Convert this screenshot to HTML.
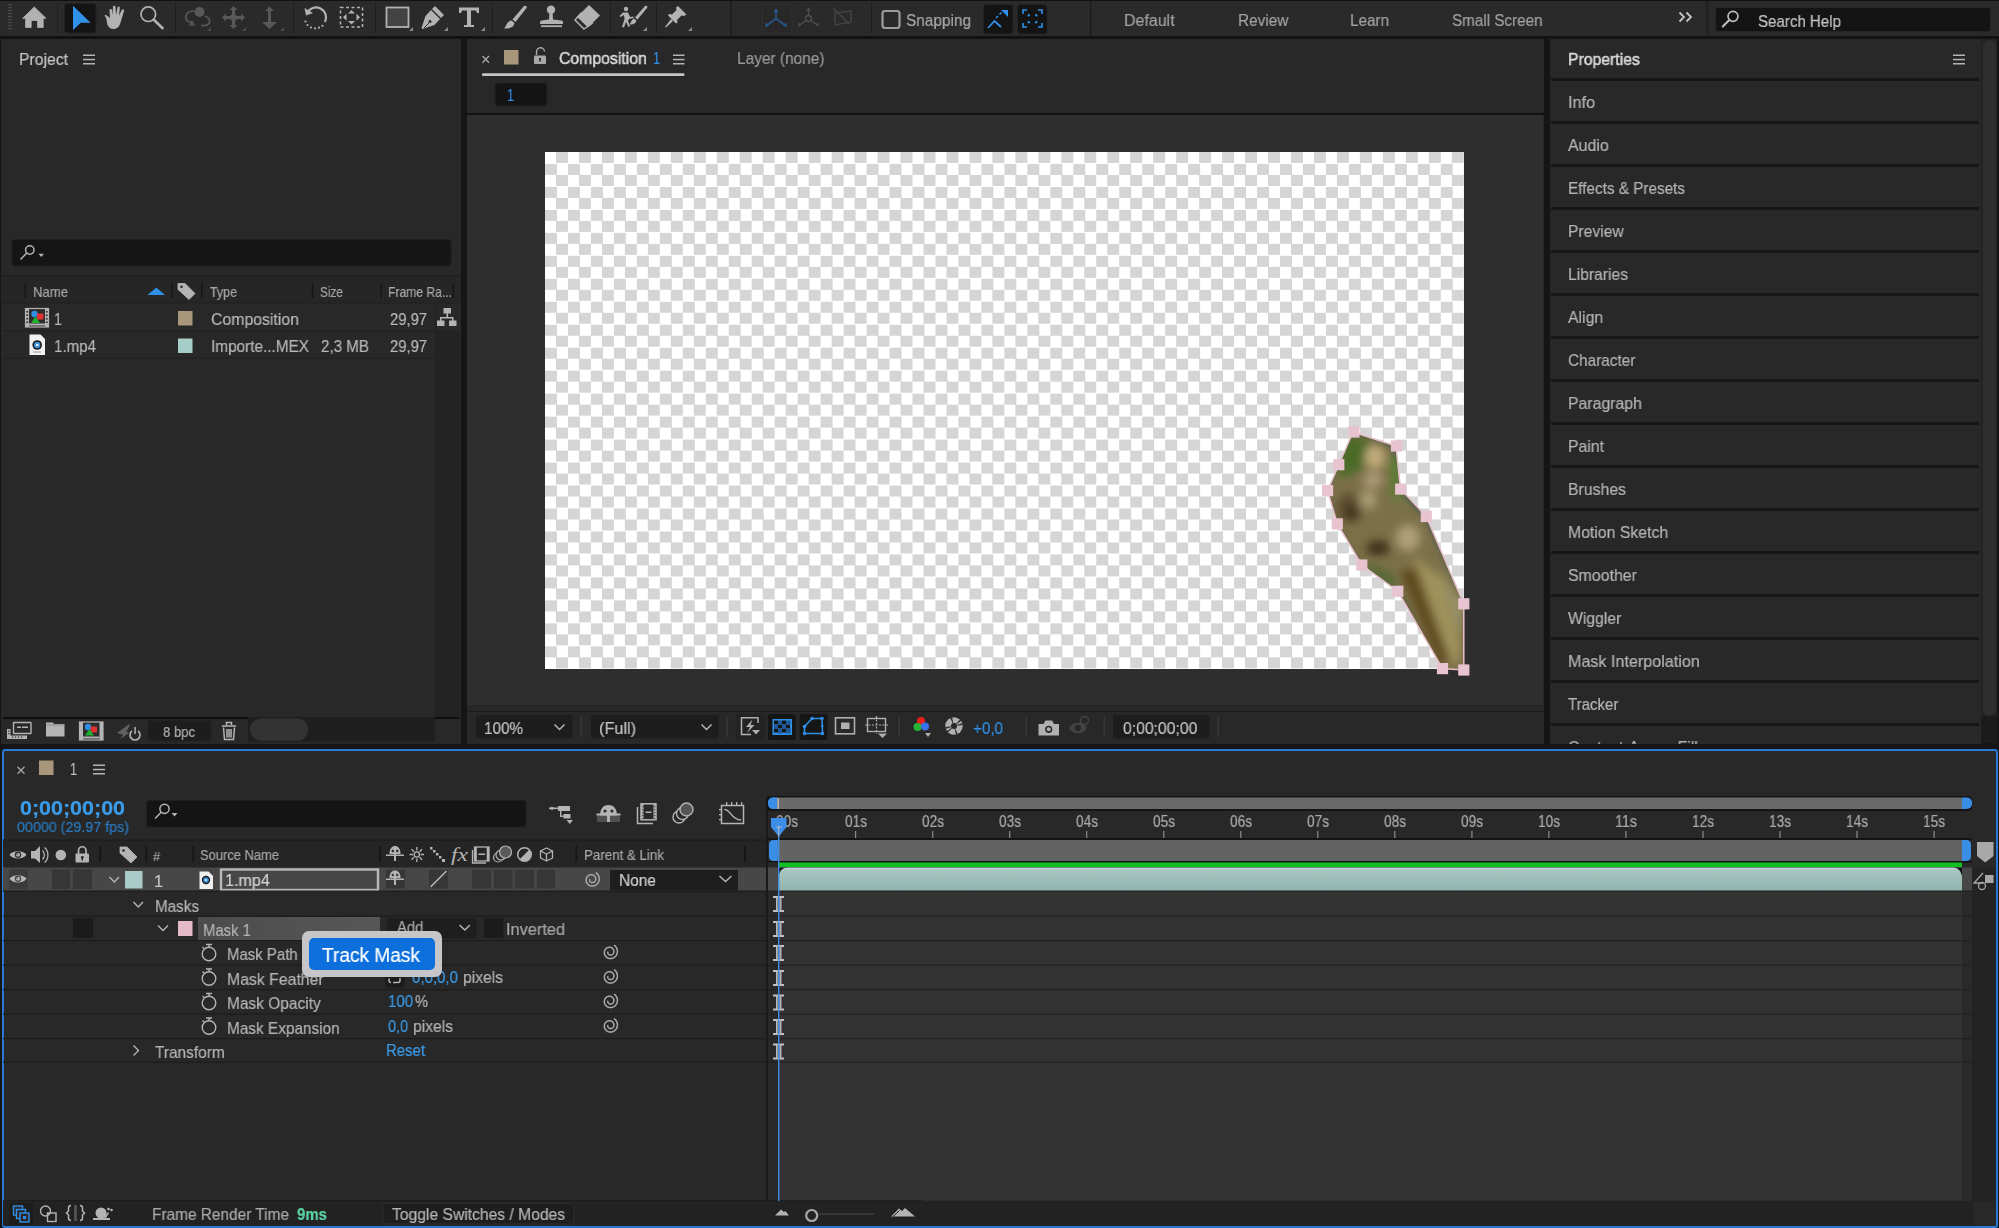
<!DOCTYPE html>
<html><head><meta charset="utf-8">
<style>
*{box-sizing:border-box;margin:0;padding:0}
html,body{width:1999px;height:1228px;overflow:hidden;background:#151515;font-family:"Liberation Sans",sans-serif;color:#b4b4b4}
.a{position:absolute}
.t{position:absolute;white-space:nowrap;line-height:1;will-change:transform;transform-origin:0 0;transform:scaleX(.92);-webkit-text-stroke:0.2px currentColor}
svg{position:absolute;overflow:visible}
</style></head><body>

<!-- TOP TOOLBAR -->
<div class="a" style="left:0;top:0;width:1999px;height:38px;background:#111"></div>
<div class="a" style="left:0;top:1px;width:1999px;height:34.5px;background:#2a2a2a"></div>
<svg style="left:0;top:0" width="1999" height="38" viewBox="0 0 1999 38">
<g fill="#4a4a4a"><rect x="8" y="4" width="4" height="1.2"/><rect x="8" y="7" width="4" height="1.2"/><rect x="8" y="10" width="4" height="1.2"/><rect x="8" y="13" width="4" height="1.2"/><rect x="8" y="16" width="4" height="1.2"/><rect x="8" y="19" width="4" height="1.2"/><rect x="8" y="22" width="4" height="1.2"/><rect x="8" y="25" width="4" height="1.2"/><rect x="8" y="28" width="4" height="1.2"/></g>
<g fill="#1f1f1f"><rect x="57" y="3" width="1" height="30"/><rect x="175" y="3" width="1" height="30"/><rect x="293" y="3" width="1" height="30"/><rect x="375" y="3" width="1" height="30"/><rect x="492" y="3" width="1" height="30"/><rect x="610" y="3" width="1" height="30"/><rect x="656" y="3" width="1" height="30"/><rect x="730" y="1" width="2" height="34"/><rect x="871" y="3" width="1" height="30"/></g>
<!-- home -->
<path d="M34.3 7 L46 18.3 L43.2 18.3 L43.2 27.5 L37.6 27.5 L37.6 20.5 L31.2 20.5 L31.2 27.5 L25.6 27.5 L25.6 18.3 L22.6 18.3 Z" fill="#b2b2b2" stroke="#b2b2b2" stroke-width="0.8" stroke-linejoin="round"/>
<!-- select -->
<rect x="64.5" y="3.5" width="31.5" height="29.5" rx="3" fill="#141414" stroke="#232323"/>
<path d="M73 5.8 L90.6 22.8 L80.8 22.8 L73 30 Z" fill="#3191e8"/>
<!-- hand -->
<g fill="#b2b2b2"><path d="M106 17.5 C104 16 104.5 14.5 106.5 15.2 L110 18 L109.5 10 C109.5 8.5 111.8 8.5 112 10 L112.5 15 L113 6.8 C113 5.3 115.5 5.3 115.5 6.8 L116 15 L117.5 7.5 C117.8 6 120 6.3 119.8 7.8 L119 15.5 L121.8 10 C122.5 8.7 124.4 9.5 124 11 L121 21 C119.5 27 117 29 113.5 29 C110.5 29 109 27.5 107.5 25 Z"/></g>
<!-- zoom -->
<circle cx="148.3" cy="14.2" r="7.3" fill="none" stroke="#b2b2b2" stroke-width="1.7"/>
<path d="M153.8 19.8 L162.6 28.2" stroke="#b2b2b2" stroke-width="2.6" stroke-linecap="round"/>
<!-- orbit (dim) -->
<g fill="none" stroke="#585858" stroke-width="1.7"><path d="M194 11 C187 11 185 15 186 19 C187 22 190 22.5 193 22.5"/><path d="M205 16 C210 18 211 22 208 24.5 C206 26 203 25.5 201 25.5"/></g>
<circle cx="199.5" cy="12" r="5" fill="#585858"/><path d="M189 25.5 L195 25.5 L192 20 Z" fill="#585858"/>
<path d="M207 31 L211 31 L211 27 Z" fill="#4a4a4a"/>
<!-- move (dim) -->
<g fill="#585858"><path d="M233.5 6 L237.5 10 L235 10 L235 25 L237.5 25 L233.5 29 L229.5 25 L232 25 L232 10 L229.5 10 Z"/><path d="M222 17.5 L226 13.5 L226 16 L241 16 L241 13.5 L245 17.5 L241 21.5 L241 19 L226 19 L226 21.5 Z"/><circle cx="233.5" cy="17.5" r="3.5"/></g>
<path d="M242 31 L246 31 L246 27 Z" fill="#4a4a4a"/>
<!-- vertical arrow dim -->
<g fill="#585858"><path d="M269.5 6.5 L274 11 L271 11 L271 22 L277 22 L269.5 29 L262 22 L268 22 L268 11 L265 11 Z"/></g>
<path d="M280 31 L284 31 L284 27 Z" fill="#4a4a4a"/>
<!-- rotate -->
<path d="M307 13 A 10 10 0 1 1 325 22" fill="none" stroke="#b2b2b2" stroke-width="2.2"/>
<path d="M304.5 8 L306 15.5 L313 13 Z" fill="#b2b2b2"/>
<g fill="#b2b2b2"><circle cx="305.5" cy="21.5" r="1.1"/><circle cx="307.5" cy="25" r="1.1"/><circle cx="311" cy="27.5" r="1.1"/><circle cx="315" cy="28.3" r="1.1"/><circle cx="319" cy="27.7" r="1.1"/><circle cx="322.5" cy="25.8" r="1.1"/></g>
<!-- frame dashed -->
<rect x="340.5" y="7.5" width="22" height="19.5" fill="none" stroke="#b2b2b2" stroke-width="1.6" stroke-dasharray="3 2.5"/>
<g fill="#b2b2b2"><path d="M351.5 10 L355 13.5 L348 13.5 Z"/><path d="M351.5 24.5 L355 21 L348 21 Z"/><path d="M343 17.3 L346.5 13.8 L346.5 20.8 Z"/><path d="M360 17.3 L356.5 13.8 L356.5 20.8 Z"/></g>
<!-- rect tool -->
<rect x="386.5" y="7.5" width="22" height="19.5" fill="#434343" stroke="#b2b2b2" stroke-width="1.8"/>
<path d="M409 31 L413 31 L413 27 Z" fill="#8a8a8a"/>
<!-- pen -->
<g fill="#b2b2b2"><path d="M435 6 L444 15 L441 18 L432 9 Z"/><path d="M431 10 L440 19 L434.5 25 L422.5 29 L421.5 28 L425.5 16 Z"/></g>
<path d="M424 28 L429 23" stroke="#2a2a2a" stroke-width="1"/><circle cx="430" cy="21.5" r="1.5" fill="#2a2a2a"/>
<path d="M444 31 L448 31 L448 27 Z" fill="#8a8a8a"/>
<!-- T -->
<path d="M459 7.5 L479 7.5 L479 13 L477 13 L476 10.5 L471 10.5 L471 25 L474 25 L474 27 L464 27 L464 25 L467 25 L467 10.5 L462 10.5 L461 13 L459 13 Z" fill="#b2b2b2"/>
<path d="M481 31 L485 31 L485 27 Z" fill="#8a8a8a"/>
<!-- brush -->
<g fill="#b2b2b2"><path d="M524 6 C526 5 527.5 6.5 526.5 8 L515.5 22 L512.5 19.5 Z"/><path d="M511.5 20.5 L514.5 23 C514 27 510 29 504 28.5 C506.5 26.5 506 22 511.5 20.5 Z"/></g>
<!-- stamp -->
<g fill="#b2b2b2"><circle cx="551" cy="9.7" r="4.2"/><path d="M549.5 12 L552.5 12 L553 19.5 L561.5 20.5 C562.5 20.7 563 21.5 563 22.5 L563 24 L540 24 L540 22.5 C540 21.5 540.5 20.7 541.5 20.5 L549 19.5 Z"/><rect x="541" y="25.3" width="21" height="1.8"/></g>
<!-- eraser -->
<g><path d="M589 5 L600 15.5 L588 27.5 L577 17 Z" fill="#b2b2b2"/><path d="M581 13 L592 23.5 L584 29 L575 20 Z" fill="none" stroke="#b2b2b2" stroke-width="1.5"/></g>
<!-- roto brush -->
<g fill="#b2b2b2"><circle cx="626" cy="9" r="2.2"/><path d="M623 12.5 L628 12.5 L630 17 L633.5 16.5 L633.5 18 L629 19 L628 21 L630 26 L628.5 27 L626 22 L624 27.5 L622 27 L624.5 19 L624 15 L620.5 17 L619.5 16 Z"/><path d="M645 6 C647 5 648 6.5 647 8 L637.5 19.5 L635 17.5 Z"/><path d="M634 18.5 L636.5 20.5 C636 23.5 633 25 629.5 24.5 C631 23 631 20 634 18.5 Z"/></g>
<path d="M643 31 L647 31 L647 27 Z" fill="#8a8a8a"/>
<!-- pin -->
<g fill="#b2b2b2"><path d="M678 6 L686.5 14.5 L684 16 L681.5 15.5 L677 20 C678 22 677.5 23 676 23.5 L668 15.5 C668.5 14 670 13.5 672 14.5 L676.5 10 L676 7.5 Z"/><path d="M671 19 L673 21 L666 27.5 L665 27 Z"/></g>
<path d="M688 31 L692 31 L692 27 Z" fill="#8a8a8a"/>
<!-- axis icons -->
<rect x="762.5" y="4.5" width="29.5" height="28.5" rx="3" fill="#282828" stroke="#303030"/>
<g stroke="#285788" stroke-width="1.6" fill="none"><path d="M776 18.5 L776 10"/><path d="M776 18.5 L766 26"/><path d="M776 18.5 L786 26"/></g>
<g fill="#285788"><path d="M776 8.5 L779 12 L773 12 Z"/><path d="M765 27 L766 22.5 L769 25.5 Z"/><path d="M787 27 L783 25.5 L786 22.5 Z"/></g>
<g stroke="#4e4e4e" stroke-width="1.4" fill="none"><circle cx="808.5" cy="18.5" r="3"/><path d="M808.5 15.5 L808.5 9"/><path d="M806 20.5 L799 25.5"/><path d="M811 20.5 L818 25.5"/></g>
<g fill="#4e4e4e"><path d="M808.5 7.5 L811 11 L806 11 Z"/><path d="M798 26.5 L799 22.5 L801.5 25 Z"/><path d="M819 26.5 L815.5 25 L818 22.5 Z"/></g>
<g stroke="#444" stroke-width="1.4" fill="none"><path d="M835 13 L851 11 L851 22 L835 25 Z"/><path d="M833 8 L849 24"/></g>
<!-- snapping -->
<rect x="882.5" y="11" width="17" height="17" rx="2.5" fill="none" stroke="#9e9e9e" stroke-width="2.2"/>
<rect x="983.5" y="4.5" width="29.5" height="29.5" rx="3" fill="#141414" stroke="#232323"/>
<path d="M988 28 L994.5 21 L1001 27" fill="none" stroke="#3191e8" stroke-width="1.8"/>
<path d="M996 18 L998 16 M999.5 14.5 L1001.5 12.5" stroke="#3191e8" stroke-width="1.5"/>
<path d="M1001 10 L1008 10 L1008 17 Z" fill="#3191e8"/>
<rect x="1017.5" y="4.5" width="29.5" height="29.5" rx="3" fill="#141414" stroke="#232323"/>
<g fill="none" stroke="#3191e8" stroke-width="1.6"><path d="M1023 14 L1023 10 L1027 10"/><path d="M1038 10 L1042 10 L1042 14"/><path d="M1023 23 L1023 27 L1027 27"/><path d="M1038 27 L1042 27 L1042 23"/><path d="M1028.5 16.5 L1028.5 15 L1030 15 M1035 15 L1036.5 15 L1036.5 16.5 M1028.5 21 L1028.5 22.5 L1030 22.5 M1035 22.5 L1036.5 22.5 L1036.5 21"/></g>
<!-- workspace >> -->
<g fill="none" stroke="#c4c4c4" stroke-width="1.8"><path d="M1679.5 12.5 L1684 17 L1679.5 21.5"/><path d="M1686.5 12.5 L1691 17 L1686.5 21.5"/></g>
<rect x="1706" y="1" width="3" height="34.5" fill="#222"/>
<rect x="1090" y="1" width="1.2" height="34.5" fill="#1a1a1a"/>
<rect x="1715.5" y="7.5" width="275" height="24" rx="3" fill="#141414" stroke="#252525"/>
<circle cx="1733" cy="16.3" r="5" fill="none" stroke="#bdbdbd" stroke-width="1.7"/>
<path d="M1729.3 20 L1722.8 26.5" stroke="#bdbdbd" stroke-width="2" stroke-linecap="round"/>
</svg>

<div class="t" style="left:906.00px;top:12.11px;font-size:17.0px;color:#a9a9a9;transform:scaleX(0.9047)">Snapping</div>
<div class="t" style="left:1124.00px;top:11.91px;font-size:17.0px;color:#a2a2a2;transform:scaleX(0.9392)">Default</div>
<div class="t" style="left:1237.70px;top:11.91px;font-size:17.0px;color:#a2a2a2;transform:scaleX(0.9022)">Review</div>
<div class="t" style="left:1350.30px;top:11.91px;font-size:17.0px;color:#a2a2a2;transform:scaleX(0.8992)">Learn</div>
<div class="t" style="left:1451.50px;top:11.91px;font-size:17.0px;color:#a2a2a2;transform:scaleX(0.8951)">Small Screen</div>
<div class="t" style="left:1758.00px;top:13.11px;font-size:17.0px;color:#c4c4c4;transform:scaleX(0.8871)">Search Help</div>
<!-- PROJECT PANEL -->
<div class="a" id="proj" style="left:1px;top:38.5px;width:460px;height:705px;background:#282828"></div>
<svg style="left:0;top:0" width="470" height="760" viewBox="0 0 470 760">
<g fill="#b4b4b4"><rect x="83" y="54.5" width="12" height="1.5"/><rect x="83" y="58.8" width="12" height="1.5"/><rect x="83" y="63" width="12" height="1.5"/></g>
<rect x="12" y="239.5" width="439" height="26.5" rx="3" fill="#151515" stroke="#1f1f1f"/>
<circle cx="29.8" cy="250" r="4.2" fill="none" stroke="#b4b4b4" stroke-width="1.5"/>
<path d="M26.8 253 L21 259" stroke="#b4b4b4" stroke-width="1.5" stroke-linecap="round"/>
<path d="M38.5 253.8 L44 253.8 L41.2 257 Z" fill="#b4b4b4"/>
<rect x="1" y="276" width="460" height="26.5" fill="#262626"/>
<rect x="1" y="275" width="460" height="1.5" fill="#202020"/>
<rect x="1" y="302.5" width="460" height="1" fill="#202020"/>
<g fill="#161616"><rect x="24.5" y="283" width="1.4" height="15"/><rect x="171" y="283" width="1.4" height="15"/><rect x="201" y="283" width="1.4" height="15"/><rect x="311.8" y="283" width="1.4" height="15"/><rect x="380.5" y="283" width="1.4" height="15"/><rect x="452.5" y="283" width="1.4" height="15"/></g>
<path d="M147.5 295 L156.3 287.5 L165 295 Z" fill="#2f8ee6"/>
<path d="M178 283.5 L185 283.5 L195 293.5 L189 299.5 L178 289.5 Z" fill="#b4b4b4" stroke="#b4b4b4" stroke-width="0.8" stroke-linejoin="round"/>
<circle cx="181.5" cy="286.8" r="1.3" fill="#282828"/>
<rect x="1" y="330.3" width="434" height="1.2" fill="#222"/>
<rect x="1" y="357.5" width="434" height="1.2" fill="#222"/>
<rect x="435" y="330.5" width="24.5" height="386.5" fill="#232323"/>
<rect x="435" y="303" width="1" height="27.5" fill="#232323"/>
<!-- comp icon -->
<rect x="25.5" y="308.5" width="23" height="18.5" fill="#2c2c2c" stroke="#b4b4b4" stroke-width="1.2"/>
<g fill="#b4b4b4"><rect x="25.5" y="308.5" width="3.5" height="18.5"/><rect x="45" y="308.5" width="3.5" height="18.5"/></g>
<g fill="#2c2c2c"><rect x="26.3" y="311" width="1.8" height="1.5"/><rect x="26.3" y="314.5" width="1.8" height="1.5"/><rect x="26.3" y="318" width="1.8" height="1.5"/><rect x="26.3" y="321.5" width="1.8" height="1.5"/><rect x="45.9" y="311" width="1.8" height="1.5"/><rect x="45.9" y="314.5" width="1.8" height="1.5"/><rect x="45.9" y="318" width="1.8" height="1.5"/><rect x="45.9" y="321.5" width="1.8" height="1.5"/></g>
<rect x="29" y="323.5" width="16" height="2" fill="#b4b4b4"/>
<circle cx="34.5" cy="314" r="3.2" fill="#2f8ee6"/>
<rect x="37" y="313.5" width="6.5" height="6" fill="#e03030"/>
<path d="M31 323 L35.5 316.5 L40 323 Z" fill="#20b030"/>
<!-- file icon -->
<path d="M29.5 334.5 L40.5 334.5 L45 339 L45 355 L29.5 355 Z" fill="#f2f2f2"/>
<circle cx="37.2" cy="345" r="4.8" fill="#1a1a1a"/>
<circle cx="37.2" cy="345" r="3.2" fill="#3a8fd8"/>
<circle cx="37.2" cy="345" r="1.3" fill="#e8f0f8"/>
<rect x="33" y="351.5" width="8" height="1" fill="#999"/>
<rect x="178" y="311" width="14.5" height="14.5" fill="#a8977a"/>
<rect x="178" y="338.5" width="14.5" height="14.5" fill="#a7cdc9"/>
<!-- flowchart -->
<g fill="#b4b4b4"><rect x="443.5" y="308" width="7.5" height="5.5"/><rect x="437" y="320.5" width="7.5" height="5.5"/><rect x="449" y="320.5" width="7.5" height="5.5"/><rect x="446.5" y="313" width="1.6" height="4"/><rect x="440" y="317" width="13" height="1.5"/><rect x="440" y="317" width="1.5" height="4"/><rect x="452" y="317" width="1.5" height="4"/></g>
<!-- bottom toolbar -->
<rect x="3" y="717" width="245" height="2" fill="#0e0e0e"/>
<rect x="435" y="717" width="24.5" height="2" fill="#0e0e0e"/>
<rect x="248" y="717" width="187" height="24.7" fill="#1f1f1f"/>
<rect x="250" y="718.5" width="58" height="22.2" rx="11" fill="#333"/>
<rect x="148" y="720.5" width="63" height="20.5" rx="2" fill="#1d1d1d" stroke="#222"/>
<!-- interpret footage icon -->
<g fill="#b4b4b4"><rect x="13.5" y="722.5" width="17.5" height="11" rx="0.5" fill="none" stroke="#b4b4b4" stroke-width="1.4"/><rect x="17" y="726.5" width="4" height="1.5"/><rect x="22" y="726.5" width="6" height="1.5"/><rect x="7" y="729" width="3.5" height="10"/><rect x="7" y="735.5" width="20" height="3.5"/></g>
<g fill="#282828"><rect x="8.2" y="730.5" width="1.2" height="1.2"/><rect x="8.2" y="733" width="1.2" height="1.2"/><rect x="12" y="736.5" width="1.2" height="1.2"/><rect x="15" y="736.5" width="1.2" height="1.2"/><rect x="18" y="736.5" width="1.2" height="1.2"/><rect x="21" y="736.5" width="1.2" height="1.2"/></g>
<!-- folder -->
<path d="M46 722.5 L53 722.5 L54 724 L64.5 724 L64.5 736.5 L46 736.5 Z" fill="#b4b4b4"/>
<rect x="46" y="724.5" width="18.5" height="1" fill="#8a8a8a"/>
<!-- comp icon 2 -->
<rect x="79.5" y="722" width="23.5" height="18" fill="#2c2c2c" stroke="#b4b4b4" stroke-width="1.2"/>
<g fill="#b4b4b4"><rect x="79.5" y="722" width="3.5" height="18"/><rect x="99.5" y="722" width="3.5" height="18"/><rect x="83" y="736.5" width="16.5" height="2"/></g>
<circle cx="88" cy="727" r="3.2" fill="#2f8ee6"/><rect x="90.5" y="726.5" width="6.5" height="6" fill="#e03030"/><path d="M85 735.5 L89.5 729 L94 735.5 Z" fill="#20b030"/>
<!-- render/power icon -->
<path d="M117 733 L128 725 L130 724 L129 727 L124 735 Z" fill="#606060"/>
<path d="M120 739 L126 731 L129 733 Z" fill="#606060"/>
<path d="M132 731 A 5 5 0 1 0 138 731" fill="none" stroke="#b4b4b4" stroke-width="1.6"/>
<rect x="134.3" y="727" width="1.5" height="7" fill="#b4b4b4"/>
<!-- trash -->
<g fill="none" stroke="#b4b4b4" stroke-width="1.5"><path d="M222 726 L236 726"/><path d="M226.5 725 L226.5 722.5 L231.5 722.5 L231.5 725"/><path d="M223.5 727.5 L224.5 739.5 L233.5 739.5 L234.5 727.5"/><path d="M227 729 L227 737.5 M229 729 L229 737.5 M231 729 L231 737.5"/></g>
</svg>

<div class="t" style="left:19.00px;top:50.81px;font-size:17.0px;color:#c4c4c4;transform:scaleX(0.9259)">Project</div>
<div class="t" style="left:33.00px;top:284.20px;font-size:15.0px;color:#a8a8a8;transform:scaleX(0.8747)">Name</div>
<div class="t" style="left:210.00px;top:284.20px;font-size:15.0px;color:#a8a8a8;transform:scaleX(0.8300)">Type</div>
<div class="t" style="left:320.00px;top:284.20px;font-size:15.0px;color:#a8a8a8;transform:scaleX(0.7880)">Size</div>
<div class="t" style="left:388.00px;top:284.20px;font-size:15.0px;color:#a8a8a8;transform:scaleX(0.8082)">Frame Ra...</div>
<div class="t" style="left:54.00px;top:310.71px;font-size:17.0px;color:#b8b8b8;transform:scaleX(0.8449)">1</div>
<div class="t" style="left:211.00px;top:310.71px;font-size:17.0px;color:#b8b8b8;transform:scaleX(0.9312)">Composition</div>
<div class="t" style="left:390.00px;top:310.71px;font-size:17.0px;color:#b8b8b8;transform:scaleX(0.8696)">29,97</div>
<div class="t" style="left:54.00px;top:337.81px;font-size:17.0px;color:#b8b8b8;transform:scaleX(0.8889)">1.mp4</div>
<div class="t" style="left:211.00px;top:337.81px;font-size:17.0px;color:#b8b8b8;transform:scaleX(0.9021)">Importe...MEX</div>
<div class="t" style="left:321.00px;top:337.81px;font-size:17.0px;color:#b8b8b8;transform:scaleX(0.8912)">2,3 MB</div>
<div class="t" style="left:390.00px;top:337.81px;font-size:17.0px;color:#b8b8b8;transform:scaleX(0.8696)">29,97</div>
<div class="t" style="left:163.00px;top:723.78px;font-size:15.5px;color:#b0b0b0;transform:scaleX(0.8438)">8 bpc</div>
<!-- COMP PANEL -->
<div class="a" id="comp" style="left:466.5px;top:38.5px;width:1077.5px;height:705px;background:#282828"></div>
<div class="a" style="left:466.5px;top:113px;width:1077.5px;height:2px;background:#121212"></div>
<div class="a" style="left:466.5px;top:115px;width:1076.5px;height:589.5px;background:#2e2e2e"></div>
<div class="a" id="checker" style="left:545px;top:152px;width:919px;height:516.5px;background:conic-gradient(#d5d5d5 0 25%,#fff 0 50%,#d5d5d5 0 75%,#fff 0) 0 0/22.975px 22.975px"></div>
<div class="a" style="left:466.5px;top:710.5px;width:1076.5px;height:1.5px;background:#1b1b1b"></div>
<svg style="left:0;top:0" width="1550" height="750" viewBox="0 0 1550 750">
<defs>
<clipPath id="mclip"><path d="M1353 432 L1396 446 L1400.5 489 L1426.3 516.5 L1463.8 604 L1463.8 670 L1442.5 668.6 L1397.8 591.3 L1361.8 565 L1337.3 523.9 L1327.6 490.6 L1338.8 464.7 Z"/></clipPath>
<filter id="bl" x="-50%" y="-50%" width="200%" height="200%"><feGaussianBlur stdDeviation="5"/></filter>
<filter id="bl2" x="-50%" y="-50%" width="200%" height="200%"><feGaussianBlur stdDeviation="2.5"/></filter>
</defs>
<g clip-path="url(#mclip)">
<rect x="1320" y="425" width="150" height="250" fill="#7c7048"/>
<g filter="url(#bl2)">
<path d="M1353 428 L1396 444 L1402 489 L1428 516 L1470 604 L1470 680 L1440 680 L1397 595 L1358 568 L1332 525 L1322 490 L1335 462 Z" fill="none" stroke="#59604f" stroke-width="10"/>
</g>
<g filter="url(#bl)">
<path d="M1348 436 L1372 440 L1362 470 L1342 478 L1334 466 Z" fill="#4c6a26"/>
<path d="M1388 456 L1402 458 L1403 500 L1392 500 Z" fill="#5e7e34"/>
<ellipse cx="1375" cy="457" rx="10" ry="12" fill="#c2ac7c"/>
<ellipse cx="1373" cy="480" rx="10" ry="8" fill="#ae9a7c"/>
<ellipse cx="1350" cy="508" rx="14" ry="15" fill="#5e4e30"/>
<ellipse cx="1368" cy="500" rx="9" ry="10" fill="#a89a70"/>
<ellipse cx="1351" cy="512" rx="6" ry="7" fill="#3a2a12"/>
<ellipse cx="1408" cy="538" rx="12" ry="13" fill="#b0a07a"/>
<ellipse cx="1378" cy="548" rx="12" ry="7" fill="#3c2c14"/>
<path d="M1362 562 L1392 574 L1398 590 L1368 572 Z" fill="#50682e"/>
<path d="M1414 556 L1442 578 L1462 648 L1455 668 L1412 590 Z" fill="#a0925c"/>
<path d="M1400 572 L1416 566 L1450 660 L1440 666 Z" fill="#5e4a1e"/>
<path d="M1440 570 L1462 605 L1462 640 L1452 605 Z" fill="#9c9a72"/>
</g>
</g>
<path d="M1353 432 L1396 446 L1400.5 489 L1426.3 516.5 L1463.8 604 L1463.8 670 L1442.5 668.6 L1397.8 591.3 L1361.8 565 L1337.3 523.9 L1327.6 490.6 L1338.8 464.7 Z" fill="none" stroke="#e8c0cc" stroke-width="1.5"/>
<g fill="#e8c4d0"><rect x="1348.3" y="426.4" width="11.2" height="11.2"/><rect x="1390.9" y="440.4" width="11.2" height="11.2"/><rect x="1333.2" y="459.1" width="11.2" height="11.2"/><rect x="1322.0" y="485.0" width="11.2" height="11.2"/><rect x="1395.1" y="483.5" width="11.2" height="11.2"/><rect x="1420.7" y="510.9" width="11.2" height="11.2"/><rect x="1331.7" y="518.3" width="11.2" height="11.2"/><rect x="1356.2" y="559.4" width="11.2" height="11.2"/><rect x="1392.2" y="585.7" width="11.2" height="11.2"/><rect x="1458.2" y="598.2" width="11.2" height="11.2"/><rect x="1436.9" y="663.0" width="11.2" height="11.2"/><rect x="1458.2" y="664.4" width="11.2" height="11.2"/></g>
<!-- tab -->
<path d="M482.5 56 L489 62.8 M489 56 L482.5 62.8" stroke="#a8a8a8" stroke-width="1.3"/>
<rect x="504" y="50" width="14.5" height="14.5" fill="#a8977a"/>
<path d="M536.5 55 L536.5 52 A 4 4 0 0 1 544.5 51.5" fill="none" stroke="#a8a8a8" stroke-width="1.4"/>
<rect x="534" y="55.5" width="12" height="8.5" rx="1" fill="#a8a8a8"/>
<path d="M539 58 L541 58 L540.7 61.5 L539.3 61.5 Z" fill="#282828"/>
<g fill="#b4b4b4"><rect x="673" y="54.5" width="11.5" height="1.5"/><rect x="673" y="58.8" width="11.5" height="1.5"/><rect x="673" y="63" width="11.5" height="1.5"/></g>
<rect x="482" y="73.3" width="202.5" height="2.7" rx="1" fill="#c4c4c4"/>
<rect x="495" y="83" width="52" height="23" rx="3" fill="#141414" stroke="#202020"/>
<!-- viewer toolbar -->
<rect x="475.5" y="714.5" width="97.5" height="24.5" rx="3" fill="#1d1d1d" stroke="#282828"/>
<path d="M554.5 724.5 L559.5 729.5 L564.5 724.5" fill="none" stroke="#b4b4b4" stroke-width="1.5"/>
<rect x="580.5" y="717" width="1.4" height="20" fill="#3a3a3a"/>
<rect x="590.5" y="714.5" width="128.5" height="24.5" rx="3" fill="#1d1d1d" stroke="#282828"/>
<path d="M701.5 724.5 L706.5 729.5 L711.5 724.5" fill="none" stroke="#b4b4b4" stroke-width="1.5"/>
<rect x="726.5" y="717" width="1.4" height="20" fill="#3a3a3a"/>
<rect x="735.5" y="714" width="29.5" height="26" rx="3" fill="#232323"/>
<path d="M758 723 L758 717.8 L741.5 717.8 L741.5 734.5 L751 734.5" fill="none" stroke="#b0b0b0" stroke-width="1.5"/>
<path d="M752.5 719.5 L746 727 L750 727 L747 733 L754.5 725 L750.5 725 Z" fill="#b0b0b0"/>
<path d="M752 730 L760 730 L756 734.5 Z" fill="#b0b0b0"/>
<rect x="768" y="714" width="28" height="26" rx="3" fill="#161616"/>
<rect x="772.5" y="719" width="19.5" height="16" fill="#2f8ee6"/>
<g fill="#161616"><rect x="774" y="720.5" width="4" height="4"/><rect x="782" y="720.5" width="4" height="4"/><rect x="778" y="724.5" width="4" height="4"/><rect x="786" y="724.5" width="4" height="4"/><rect x="774" y="728.5" width="4" height="4"/><rect x="782" y="728.5" width="4" height="4"/></g>
<g fill="#1f5a9a"><rect x="778" y="720.5" width="4" height="4"/><rect x="786" y="720.5" width="4.5" height="4"/><rect x="774" y="724.5" width="4" height="4"/><rect x="782" y="724.5" width="4" height="4"/><rect x="778" y="728.5" width="4" height="5"/><rect x="786" y="728.5" width="4.5" height="5"/></g>
<rect x="799.5" y="714" width="28" height="26" rx="3" fill="#161616"/>
<path d="M804.5 733.5 L804.5 726.5 L812 718.5 L822 718.5 L822.5 733.5 Z" fill="none" stroke="#2f8ee6" stroke-width="1.6"/>
<g fill="#2f8ee6"><circle cx="804.5" cy="733.5" r="1.8"/><circle cx="804.5" cy="726.5" r="1.8"/><circle cx="812" cy="718.5" r="1.8"/><circle cx="822" cy="718.5" r="1.8"/><circle cx="822.5" cy="733.5" r="1.8"/><circle cx="822.3" cy="726" r="1.3"/></g>
<rect x="835.5" y="717.8" width="19" height="16" fill="none" stroke="#b0b0b0" stroke-width="1.6"/>
<rect x="841" y="722.5" width="8.5" height="6.5" fill="#b0b0b0"/>
<rect x="867.5" y="718.5" width="18" height="13" fill="none" stroke="#b0b0b0" stroke-width="1.4"/>
<path d="M876.5 716 L876.5 734 M865 725 L888 725" stroke="#b0b0b0" stroke-width="1.2" stroke-dasharray="2 1.5"/>
<path d="M878 733.5 L887 733.5 L882.5 738 Z" fill="#b0b0b0"/>
<rect x="898.5" y="717" width="1.4" height="20" fill="#3a3a3a"/>
<circle cx="921" cy="721" r="4" fill="#e8201c"/><circle cx="917.5" cy="727" r="4" fill="#24b434"/><circle cx="925" cy="726.5" r="4" fill="#3a70e8"/>
<path d="M925 733 L931 733 L928 737 Z" fill="#b0b0b0"/>
<circle cx="954" cy="726" r="8.7" fill="#b0b0b0"/>
<g fill="#282828"><path d="M954 726 L950 717.5 L952 717.3 Z"/><path d="M954 726 L962.5 723 L962.5 725 Z"/><path d="M954 726 L958 734.5 L956 734.7 Z"/><path d="M954 726 L945.5 729 L945.5 727 Z"/><path d="M954 726 L960 719.5 L961.2 720.7 Z"/><path d="M954 726 L948 732.5 L946.8 731.3 Z"/></g>
<circle cx="954" cy="726" r="3" fill="#282828"/>
<rect x="1025.5" y="717" width="1.4" height="20" fill="#3a3a3a"/>
<path d="M1038.5 724 L1043.5 724 L1045.5 720.5 L1052 720.5 L1054 724 L1059 724 L1059 735.5 L1038.5 735.5 Z" fill="#b0b0b0"/>
<circle cx="1048.7" cy="729.3" r="3.6" fill="#282828"/><circle cx="1048.7" cy="729.3" r="2" fill="#b0b0b0"/>
<path d="M1069 728 C1073 721 1083 721 1087 728 C1083 735 1073 735 1069 728 Z" fill="#444"/>
<circle cx="1078" cy="728" r="3.2" fill="#282828"/>
<circle cx="1084.5" cy="720.5" r="4" fill="none" stroke="#444" stroke-width="1.5"/>
<rect x="1103.5" y="717" width="1.4" height="20" fill="#3a3a3a"/>
<rect x="1112.5" y="714.5" width="97.5" height="24.5" rx="3" fill="#1d1d1d" stroke="#282828"/>
<rect x="1217.5" y="717" width="1.4" height="20" fill="#3a3a3a"/>
</svg>

<div class="t" style="left:558.80px;top:50.66px;font-size:16.7px;color:#d8d8d8;transform:scaleX(0.9465);-webkit-text-stroke:0.55px currentColor">Composition</div>
<div class="t" style="left:652.50px;top:50.66px;font-size:16.7px;color:#3191e8;transform:scaleX(0.7542)">1</div>
<div class="t" style="left:736.50px;top:50.41px;font-size:17.0px;color:#9a9a9a;transform:scaleX(0.9078)">Layer (none)</div>
<div class="t" style="left:507.00px;top:86.91px;font-size:17.0px;color:#3191e8;transform:scaleX(0.7393)">1</div>
<div class="t" style="left:484.20px;top:719.71px;font-size:17.0px;color:#c4c4c4;transform:scaleX(0.8992)">100%</div>
<div class="t" style="left:598.90px;top:719.71px;font-size:17.0px;color:#c4c4c4;transform:scaleX(0.9582)">(Full)</div>
<div class="t" style="left:973.00px;top:720.11px;font-size:17.0px;color:#3191e8;transform:scaleX(0.8939)">+0,0</div>
<div class="t" style="left:1123.20px;top:719.71px;font-size:17.0px;color:#c4c4c4;transform:scaleX(0.9246)">0;00;00;00</div>
<!-- PROPERTIES PANEL -->
<div class="a" id="props" style="left:1550px;top:38.5px;width:431px;height:705px;background:#282828"></div>
<div class="a" style="left:1980.6px;top:38.5px;width:16.5px;height:704.5px;background:#232323"></div><div class="a" style="left:1980.6px;top:716px;width:16.5px;height:27px;background:#1b1b1b"></div>
<div class="a" style="left:1982.5px;top:40px;width:13.5px;height:676px;background:#2e2e2e;border-radius:7px"></div>
<svg style="left:1940px;top:50px" width="30" height="20"><g fill="#b4b4b4"><rect x="13" y="4.5" width="12" height="1.5"/><rect x="13" y="8.8" width="12" height="1.5"/><rect x="13" y="13" width="12" height="1.5"/></g></svg>
<div class="a" style="left:1551px;top:78px;width:428px;height:2.5px;background:#161616"></div>
<div class="a" style="left:1551px;top:121px;width:428px;height:2.5px;background:#161616"></div>
<div class="a" style="left:1551px;top:164px;width:428px;height:2.5px;background:#161616"></div>
<div class="a" style="left:1551px;top:207px;width:428px;height:2.5px;background:#161616"></div>
<div class="a" style="left:1551px;top:250px;width:428px;height:2.5px;background:#161616"></div>
<div class="a" style="left:1551px;top:293px;width:428px;height:2.5px;background:#161616"></div>
<div class="a" style="left:1551px;top:336px;width:428px;height:2.5px;background:#161616"></div>
<div class="a" style="left:1551px;top:379px;width:428px;height:2.5px;background:#161616"></div>
<div class="a" style="left:1551px;top:422px;width:428px;height:2.5px;background:#161616"></div>
<div class="a" style="left:1551px;top:465px;width:428px;height:2.5px;background:#161616"></div>
<div class="a" style="left:1551px;top:508px;width:428px;height:2.5px;background:#161616"></div>
<div class="a" style="left:1551px;top:551px;width:428px;height:2.5px;background:#161616"></div>
<div class="a" style="left:1551px;top:594px;width:428px;height:2.5px;background:#161616"></div>
<div class="a" style="left:1551px;top:637px;width:428px;height:2.5px;background:#161616"></div>
<div class="a" style="left:1551px;top:680px;width:428px;height:2.5px;background:#161616"></div>
<div class="a" style="left:1551px;top:723px;width:428px;height:2.5px;background:#161616"></div>
<div class="a" style="left:1551px;top:743.5px;width:430px;height:5px;background:#151515"></div>

<div class="t" style="left:1568.00px;top:51.76px;font-size:16.7px;color:#d8d8d8;transform:scaleX(0.9440);-webkit-text-stroke:0.55px currentColor">Properties</div>
<div class="t" style="left:1568.00px;top:94.31px;font-size:17.0px;color:#b4b4b4;transform:scaleX(0.9521)">Info</div>
<div class="t" style="left:1568.00px;top:137.31px;font-size:17.0px;color:#b4b4b4;transform:scaleX(0.9383)">Audio</div>
<div class="t" style="left:1568.00px;top:180.31px;font-size:17.0px;color:#b4b4b4;transform:scaleX(0.8995)">Effects &amp; Presets</div>
<div class="t" style="left:1568.00px;top:223.31px;font-size:17.0px;color:#b4b4b4;transform:scaleX(0.9211)">Preview</div>
<div class="t" style="left:1568.00px;top:266.31px;font-size:17.0px;color:#b4b4b4;transform:scaleX(0.9202)">Libraries</div>
<div class="t" style="left:1568.00px;top:309.31px;font-size:17.0px;color:#b4b4b4;transform:scaleX(0.9309)">Align</div>
<div class="t" style="left:1568.00px;top:352.31px;font-size:17.0px;color:#b4b4b4;transform:scaleX(0.9030)">Character</div>
<div class="t" style="left:1568.00px;top:395.31px;font-size:17.0px;color:#b4b4b4;transform:scaleX(0.9300)">Paragraph</div>
<div class="t" style="left:1568.00px;top:438.31px;font-size:17.0px;color:#b4b4b4;transform:scaleX(0.9300)">Paint</div>
<div class="t" style="left:1568.00px;top:481.31px;font-size:17.0px;color:#b4b4b4;transform:scaleX(0.9300)">Brushes</div>
<div class="t" style="left:1568.00px;top:524.31px;font-size:17.0px;color:#b4b4b4;transform:scaleX(0.9300)">Motion Sketch</div>
<div class="t" style="left:1568.00px;top:567.31px;font-size:17.0px;color:#b4b4b4;transform:scaleX(0.9348)">Smoother</div>
<div class="t" style="left:1568.00px;top:610.31px;font-size:17.0px;color:#b4b4b4;transform:scaleX(0.9249)">Wiggler</div>
<div class="t" style="left:1568.00px;top:653.31px;font-size:17.0px;color:#b4b4b4;transform:scaleX(0.9488)">Mask Interpolation</div>
<div class="t" style="left:1568.00px;top:696.31px;font-size:17.0px;color:#b4b4b4;transform:scaleX(0.8860)">Tracker</div>
<div class="t" style="left:1568.00px;top:739.31px;font-size:17.0px;color:#b4b4b4;transform:scaleX(0.9300)">Content-Aware Fill</div>
<div class="a" style="left:1551px;top:743.5px;width:448px;height:5px;background:#151515"></div>
<!-- TIMELINE PANEL -->
<div class="a" id="tl" style="left:1.5px;top:748.5px;width:1996.5px;height:479.5px;border:2px solid #2b78d6;border-radius:3px;background:#282828"></div>
<svg style="left:0;top:0" width="1999" height="1228" viewBox="0 0 1999 1228">
<!-- header -->
<path d="M17.5 766.8 L24.5 773.8 M24.5 766.8 L17.5 773.8" stroke="#a8a8a8" stroke-width="1.3"/>
<rect x="39" y="760.5" width="14.5" height="14.5" fill="#a8977a"/>
<g fill="#b4b4b4"><rect x="93" y="764.5" width="12" height="1.5"/><rect x="93" y="768.8" width="12" height="1.5"/><rect x="93" y="773" width="12" height="1.5"/></g>
<rect x="146.5" y="800.5" width="379.5" height="26.5" rx="3" fill="#141414" stroke="#1f1f1f"/>
<circle cx="164.5" cy="808.8" r="4.6" fill="none" stroke="#b4b4b4" stroke-width="1.5"/>
<path d="M161.2 812.2 L155.5 818" stroke="#b4b4b4" stroke-width="1.5" stroke-linecap="round"/>
<path d="M171.5 813 L177.5 813 L174.5 816.5 Z" fill="#b4b4b4"/>
<!-- header icons -->
<g fill="#b4b4b4">
<rect x="549" y="807.5" width="9" height="1.6"/><circle cx="552" cy="808.3" r="1.6"/>
<rect x="558" y="806" width="12" height="5" rx="0.6"/><rect x="563.5" y="814" width="7" height="4.5" rx="0.6"/>
<rect x="560" y="811" width="1.4" height="6"/><rect x="560" y="815.5" width="4" height="1.4"/>
<path d="M566.5 820 L573 820 L569.8 824 Z"/>
</g>
<rect x="597" y="815.5" width="23" height="6.5" fill="#505050"/>
<g fill="#b4b4b4"><path d="M600 815.5 C600 808 604 805 608.5 805 C613 805 617 808 617 815.5 Z"/><rect x="596.5" y="813.5" width="24" height="2"/><rect x="607" y="815" width="3" height="7"/></g>
<circle cx="605" cy="811" r="1.6" fill="#2a2a2a"/><circle cx="612" cy="811" r="1.6" fill="#2a2a2a"/>
<g fill="none" stroke="#b4b4b4" stroke-width="1.5"><rect x="641" y="803.8" width="15" height="16"/><path d="M637.5 807 L637.5 823.5 L653 823.5"/></g>
<g fill="#b4b4b4"><rect x="641" y="803.8" width="2.5" height="16"/><rect x="653.5" y="803.8" width="2.5" height="16"/><rect x="645.5" y="811.5" width="6" height="1.5"/></g><rect x="642.3" y="806" width="1" height="1.2" fill="#2a2a2a"/><rect x="654.3" y="806" width="1" height="1.2" fill="#2a2a2a"/><rect x="642.3" y="809" width="1" height="1.2" fill="#2a2a2a"/><rect x="654.3" y="809" width="1" height="1.2" fill="#2a2a2a"/><rect x="642.3" y="812" width="1" height="1.2" fill="#2a2a2a"/><rect x="654.3" y="812" width="1" height="1.2" fill="#2a2a2a"/><rect x="642.3" y="815" width="1" height="1.2" fill="#2a2a2a"/><rect x="654.3" y="815" width="1" height="1.2" fill="#2a2a2a"/><rect x="642.3" y="818" width="1" height="1.2" fill="#2a2a2a"/><rect x="654.3" y="818" width="1" height="1.2" fill="#2a2a2a"/>
<g fill="none" stroke="#b4b4b4" stroke-width="1.4"><circle cx="679" cy="817" r="6"/><circle cx="682.5" cy="813.5" r="6" fill="#2a2a2a"/></g>
<circle cx="686.5" cy="809.5" r="6.5" fill="#555" stroke="#b4b4b4" stroke-width="1.4"/>
<g fill="none" stroke="#b4b4b4" stroke-width="1.5"><rect x="721.5" y="805.5" width="22" height="18"/><path d="M724.5 809.5 C731 809.5 731 820 741 820"/></g>
<g fill="#b4b4b4"><rect x="726" y="802" width="1.3" height="3.5"/><rect x="731" y="802" width="1.3" height="3.5"/><rect x="736" y="802" width="1.3" height="3.5"/><rect x="741" y="802" width="1.3" height="3.5"/><rect x="719" y="809" width="2.5" height="1.3"/><rect x="719" y="814" width="2.5" height="1.3"/><rect x="719" y="819" width="2.5" height="1.3"/></g>
<!-- column header -->
<rect x="3" y="839.5" width="763" height="28" fill="#252525"/>
<rect x="3" y="839.5" width="763" height="1.5" fill="#1f1f1f"/>
<g fill="#151515"><rect x="99.5" y="846" width="1.6" height="16"/><rect x="145.5" y="846" width="1.6" height="16"/><rect x="192.5" y="846" width="1.6" height="16"/><rect x="379" y="846" width="1.6" height="16"/><rect x="575.5" y="846" width="1.6" height="16"/><rect x="744" y="846" width="1.6" height="16"/></g>
<g fill="#b4b4b4">
<path d="M9.5 854.8 C12 850 24 850 26.5 854.8 C24 859.6 12 859.6 9.5 854.8 Z"/>
<path d="M31 851 L35 851 L40 846 L40 863 L35 858.5 L31 858.5 Z"/>
<circle cx="60.8" cy="855" r="5.3"/>
<rect x="75.5" y="853.5" width="13.5" height="9" rx="1"/>
<path d="M78.5 854 L78.5 850.5 A 3.7 3.7 0 0 1 86 850.5 L86 854" fill="none" stroke="#b4b4b4" stroke-width="1.7"/>
<path d="M120 847 L127 847 L137 857 L131 863 L120 853 Z" stroke="#b4b4b4" stroke-width="0.8" stroke-linejoin="round"/>
</g>
<circle cx="18" cy="854.8" r="3.2" fill="#282828"/><circle cx="18" cy="854.8" r="2" fill="#b4b4b4"/><circle cx="17.2" cy="854" r="0.8" fill="#282828"/>
<path d="M42.5 850.5 C45 853 45 857 42.5 859.5 M44.5 847.5 C49 851 49 859 44.5 862.5" fill="none" stroke="#b4b4b4" stroke-width="1.3"/>
<circle cx="82.3" cy="857.3" r="1.4" fill="#282828"/><rect x="81.6" y="857.5" width="1.4" height="3" fill="#282828"/>
<circle cx="123.5" cy="850.5" r="1.3" fill="#282828"/>
<g fill="#b4b4b4">
<path d="M389.5 854 C389.5 848.5 392 846 395 846 C398 846 400.5 848.5 400.5 854 Z"/><rect x="386" y="854.5" width="18" height="1.5"/><rect x="394" y="854" width="2" height="7"/>
</g>
<circle cx="392.8" cy="851" r="1.2" fill="#282828"/><circle cx="397.2" cy="851" r="1.2" fill="#282828"/>
<g stroke="#b4b4b4" stroke-width="1.3"><circle cx="416.8" cy="854.5" r="2.6" fill="none"/><path d="M416.8 847 L416.8 850.5 M416.8 858.5 L416.8 862 M409.5 854.5 L413 854.5 M420.5 854.5 L424 854.5 M411.5 849.2 L414 851.7 M419.6 857.3 L422 859.8 M422 849.2 L419.6 851.7 M414 857.3 L411.5 859.8"/></g>
<g fill="#b4b4b4"><rect x="430" y="847" width="2.5" height="2.5"/><rect x="433" y="850" width="2.5" height="2.5"/><rect x="436" y="853" width="2.5" height="2.5"/><rect x="439" y="856" width="2.5" height="2.5"/><rect x="442" y="859" width="3" height="3"/></g>
<text x="451" y="861" font-family="Liberation Serif" font-style="italic" font-size="19" fill="#b4b4b4" textLength="17" lengthAdjust="spacingAndGlyphs">fx</text>
<g fill="none" stroke="#b4b4b4" stroke-width="1.3"><rect x="474.5" y="847" width="14.5" height="14"/><path d="M472.5 850 L472.5 863 L486 863"/></g>
<g fill="#b4b4b4"><rect x="474.5" y="847" width="2.3" height="14"/><rect x="486.7" y="847" width="2.3" height="14"/><rect x="478.5" y="853.5" width="6.5" height="1.5"/></g>
<circle cx="498" cy="857.5" r="4.5" fill="none" stroke="#b4b4b4" stroke-width="1.2"/>
<circle cx="501" cy="855" r="5" fill="#2a2a2a" stroke="#b4b4b4" stroke-width="1.2"/>
<circle cx="505.5" cy="852" r="6" fill="#5a5a5a" stroke="#b4b4b4" stroke-width="1.2"/>
<circle cx="524.5" cy="854.5" r="6.8" fill="none" stroke="#b4b4b4" stroke-width="1.5"/>
<path d="M529.3 849.7 A 6.8 6.8 0 0 1 519.7 859.3 Z" fill="#b4b4b4"/>
<g fill="none" stroke="#b4b4b4" stroke-width="1.3" stroke-linejoin="round"><path d="M546.5 848 L552.5 851 L552.5 858 L546.5 861 L540.5 858 L540.5 851 Z"/><path d="M540.5 851 L546.5 854 L552.5 851 M546.5 854 L546.5 861"/></g>
<!-- left pane rows -->
<rect x="3" y="867.5" width="763.5" height="23.5" fill="#474747"/>
<rect x="9" y="869.5" width="18.5" height="19.5" fill="#3b3b3b"/>
<rect x="52" y="869.5" width="18" height="19.5" fill="#363636"/>
<rect x="73" y="869.5" width="19" height="19.5" fill="#363636"/>
<path d="M9.5 878.8 C12 874 24 874 26.5 878.8 C24 883.6 12 883.6 9.5 878.8 Z" fill="#b4b4b4"/>
<circle cx="18" cy="878.8" r="3.2" fill="#474747"/><circle cx="18" cy="878.8" r="2" fill="#b4b4b4"/><circle cx="17.2" cy="878" r="0.8" fill="#474747"/>
<path d="M109.5 877 L114.3 882 L119 877" fill="none" stroke="#b4b4b4" stroke-width="1.4"/>
<rect x="125" y="871" width="17.5" height="17.5" fill="#a8cbc7"/>
<path d="M199.5 871.5 L208.5 871.5 L213 876 L213 889 L199.5 889 Z" fill="#f0f0f0"/>
<circle cx="206" cy="880" r="4.2" fill="#1a1a1a"/><circle cx="206" cy="880" r="2.8" fill="#3a8fd8"/><circle cx="206" cy="880" r="1.1" fill="#e8f0f8"/>
<rect x="221" y="869.5" width="157" height="20.5" fill="#474747" stroke="#b8b8b8" stroke-width="2.4"/>
<g fill="#363636"><rect x="386" y="870" width="19" height="18.5"/><rect x="429" y="870" width="19" height="18.5"/><rect x="472" y="870" width="19" height="18.5"/><rect x="494" y="870" width="18.5" height="18.5"/><rect x="515" y="870" width="19" height="18.5"/><rect x="537" y="870" width="18" height="18.5"/></g>
<g fill="#b4b4b4"><path d="M389.5 878 C389.5 872.5 392 870.5 395 870.5 C398 870.5 400.5 872.5 400.5 878 Z"/><rect x="386" y="878.5" width="18" height="1.5"/><rect x="394" y="878" width="2" height="7"/></g>
<circle cx="392.8" cy="875" r="1.2" fill="#363636"/><circle cx="397.2" cy="875" r="1.2" fill="#363636"/>
<path d="M431 886.5 L446 871.5" stroke="#b4b4b4" stroke-width="1.6" stroke-linecap="round"/>
<path d="M589.84 879.08 L589.74 879.31 L589.67 879.56 L589.62 879.82 L589.61 880.09 L589.64 880.37 L589.70 880.66 L589.79 880.94 L589.93 881.21 L590.10 881.47 L590.31 881.71 L590.55 881.93 L590.82 882.12 L591.13 882.29 L591.45 882.41 L591.80 882.50 L592.16 882.55 L592.54 882.55 L592.92 882.50 L593.29 882.41 L593.66 882.26 L594.02 882.07 L594.36 881.84 L594.67 881.56 L594.95 881.23 L595.20 880.87 L595.40 880.48 L595.56 880.06 L595.67 879.61 L595.72 879.14 L595.71 878.67 L595.65 878.19 L595.53 877.71 L595.35 877.25 L595.11 876.80 L594.81 876.38 L594.46 876.00 L594.06 875.65 L593.61 875.35 L593.13 875.10 L592.61 874.90 L592.06 874.77 L591.50 874.71 L590.92 874.71 L590.34 874.79 L589.77 874.93 L589.21 875.15 L588.67 875.43 L588.16 875.78 L587.70 876.20 L587.28 876.67 L586.91 877.20 L586.61 877.77 L586.38 878.39 L586.22 879.03 L586.14 879.70 L586.13 880.38 L586.21 881.06 L586.38 881.74 L586.62 882.39 L586.95 883.03 L587.35 883.62 L587.82 884.17 L588.37 884.66 L588.97 885.09 L589.63 885.45 L590.34 885.73 L591.08 885.93 L591.85 886.03 L592.63 886.05 L593.41 885.97 L594.19 885.79 L594.95 885.53 L595.68 885.17 L596.37 884.72 L597.00 884.18 L597.57 883.57 L598.07 882.89 L598.49 882.15 L598.83 881.36 L599.06 880.52 L599.20 879.65 L599.23 878.77 L599.16 877.88 L598.98 877.00 L598.69 876.14 L598.30 875.31 L597.81 874.53 L597.23 873.80 L596.55 873.15 L595.80 872.57" fill="none" stroke="#a8a8a8" stroke-width="1.5"/>
<rect x="610" y="870" width="128" height="20.5" fill="#1e1e1e"/>
<path d="M719.5 876 L725.5 881.5 L731.5 876" fill="none" stroke="#b4b4b4" stroke-width="1.5"/>
<rect x="3" y="890.5" width="763.5" height="1.2" fill="#1c1c1c"/>
<rect x="3" y="915.5" width="763.5" height="1.2" fill="#1c1c1c"/>
<rect x="3" y="940.0" width="763.5" height="1.2" fill="#1c1c1c"/>
<rect x="3" y="964.5" width="763.5" height="1.2" fill="#1c1c1c"/>
<rect x="3" y="989.0" width="763.5" height="1.2" fill="#1c1c1c"/>
<rect x="3" y="1013.5" width="763.5" height="1.2" fill="#1c1c1c"/>
<rect x="3" y="1038.0" width="763.5" height="1.2" fill="#1c1c1c"/>
<rect x="3" y="1061.5" width="763.5" height="1.2" fill="#1c1c1c"/>
<path d="M133.5 902 L138.3 907 L143 902" fill="none" stroke="#b4b4b4" stroke-width="1.4"/>
<rect x="73" y="918" width="20" height="20" fill="#1b1b1b"/>
<path d="M158 925.5 L163 930.5 L168 925.5" fill="none" stroke="#b4b4b4" stroke-width="1.4"/>
<rect x="178" y="921" width="14.5" height="15" fill="#e6b9c9"/>
<defs><linearGradient id="mg" x1="0" x2="1"><stop offset="0" stop-color="#4c4c4c"/><stop offset="1" stop-color="#575757"/></linearGradient></defs>
<rect x="198" y="917" width="182" height="23" fill="url(#mg)"/>
<rect x="387" y="918" width="89.5" height="20.5" fill="#1e1e1e"/>
<path d="M459.5 925 L464.8 930 L470 925" fill="none" stroke="#b4b4b4" stroke-width="1.5"/>
<rect x="484" y="918" width="19.5" height="20" fill="#1b1b1b"/>
<rect x="385" y="967" width="19.5" height="20.5" fill="#1b1b1b"/>
<path d="M389 976 L389 973 Q389 971 391 971 L398 971 Q400 971 400 973 L400 976 M393 982.5 L398 982.5 Q400 982.5 400 980.5 L400 978 M389 978.5 L389 980.5 Q389 982.5 391 982.5" fill="none" stroke="#b4b4b4" stroke-width="1.5"/>
<path d="M133.5 1045.5 L138.5 1050.5 L133.5 1055.5" fill="none" stroke="#b4b4b4" stroke-width="1.4"/>
<g fill="none" stroke="#b4b4b4" stroke-width="1.4"><circle cx="209" cy="954.0" r="6.8"/><path d="M206 944.5 L212 944.5 M209 944.5 L209 947.2 M202.5 947.0 L204 948.5"/></g>
<path d="M608.04 951.58 L607.94 951.81 L607.87 952.06 L607.82 952.32 L607.81 952.59 L607.84 952.87 L607.90 953.16 L607.99 953.44 L608.13 953.71 L608.30 953.97 L608.51 954.21 L608.75 954.43 L609.02 954.62 L609.33 954.79 L609.65 954.91 L610.00 955.00 L610.36 955.05 L610.74 955.05 L611.12 955.00 L611.49 954.91 L611.86 954.76 L612.22 954.57 L612.56 954.34 L612.87 954.06 L613.15 953.73 L613.40 953.37 L613.60 952.98 L613.76 952.56 L613.87 952.11 L613.92 951.64 L613.91 951.17 L613.85 950.69 L613.73 950.21 L613.55 949.75 L613.31 949.30 L613.01 948.88 L612.66 948.50 L612.26 948.15 L611.81 947.85 L611.33 947.60 L610.81 947.40 L610.26 947.27 L609.70 947.21 L609.12 947.21 L608.54 947.29 L607.97 947.43 L607.41 947.65 L606.87 947.93 L606.36 948.28 L605.90 948.70 L605.48 949.17 L605.11 949.70 L604.81 950.27 L604.58 950.89 L604.42 951.53 L604.34 952.20 L604.33 952.88 L604.41 953.56 L604.58 954.24 L604.82 954.89 L605.15 955.53 L605.55 956.12 L606.02 956.67 L606.57 957.16 L607.17 957.59 L607.83 957.95 L608.54 958.23 L609.28 958.43 L610.05 958.53 L610.83 958.55 L611.61 958.47 L612.39 958.29 L613.15 958.03 L613.88 957.67 L614.57 957.22 L615.20 956.68 L615.77 956.07 L616.27 955.39 L616.69 954.65 L617.03 953.86 L617.26 953.02 L617.40 952.15 L617.43 951.27 L617.36 950.38 L617.18 949.50 L616.89 948.64 L616.50 947.81 L616.01 947.03 L615.43 946.30 L614.75 945.65 L614.00 945.07" fill="none" stroke="#a8a8a8" stroke-width="1.5"/>
<g fill="none" stroke="#b4b4b4" stroke-width="1.4"><circle cx="209" cy="978.5" r="6.8"/><path d="M206 969 L212 969 M209 969 L209 971.7 M202.5 971.5 L204 973"/></g>
<path d="M608.04 976.08 L607.94 976.31 L607.87 976.56 L607.82 976.82 L607.81 977.09 L607.84 977.37 L607.90 977.66 L607.99 977.94 L608.13 978.21 L608.30 978.47 L608.51 978.71 L608.75 978.93 L609.02 979.12 L609.33 979.29 L609.65 979.41 L610.00 979.50 L610.36 979.55 L610.74 979.55 L611.12 979.50 L611.49 979.41 L611.86 979.26 L612.22 979.07 L612.56 978.84 L612.87 978.56 L613.15 978.23 L613.40 977.87 L613.60 977.48 L613.76 977.06 L613.87 976.61 L613.92 976.14 L613.91 975.67 L613.85 975.19 L613.73 974.71 L613.55 974.25 L613.31 973.80 L613.01 973.38 L612.66 973.00 L612.26 972.65 L611.81 972.35 L611.33 972.10 L610.81 971.90 L610.26 971.77 L609.70 971.71 L609.12 971.71 L608.54 971.79 L607.97 971.93 L607.41 972.15 L606.87 972.43 L606.36 972.78 L605.90 973.20 L605.48 973.67 L605.11 974.20 L604.81 974.77 L604.58 975.39 L604.42 976.03 L604.34 976.70 L604.33 977.38 L604.41 978.06 L604.58 978.74 L604.82 979.39 L605.15 980.03 L605.55 980.62 L606.02 981.17 L606.57 981.66 L607.17 982.09 L607.83 982.45 L608.54 982.73 L609.28 982.93 L610.05 983.03 L610.83 983.05 L611.61 982.97 L612.39 982.79 L613.15 982.53 L613.88 982.17 L614.57 981.72 L615.20 981.18 L615.77 980.57 L616.27 979.89 L616.69 979.15 L617.03 978.36 L617.26 977.52 L617.40 976.65 L617.43 975.77 L617.36 974.88 L617.18 974.00 L616.89 973.14 L616.50 972.31 L616.01 971.53 L615.43 970.80 L614.75 970.15 L614.00 969.57" fill="none" stroke="#a8a8a8" stroke-width="1.5"/>
<g fill="none" stroke="#b4b4b4" stroke-width="1.4"><circle cx="209" cy="1003.0" r="6.8"/><path d="M206 993.5 L212 993.5 M209 993.5 L209 996.2 M202.5 996.0 L204 997.5"/></g>
<path d="M608.04 1000.58 L607.94 1000.81 L607.87 1001.06 L607.82 1001.32 L607.81 1001.59 L607.84 1001.87 L607.90 1002.16 L607.99 1002.44 L608.13 1002.71 L608.30 1002.97 L608.51 1003.21 L608.75 1003.43 L609.02 1003.62 L609.33 1003.79 L609.65 1003.91 L610.00 1004.00 L610.36 1004.05 L610.74 1004.05 L611.12 1004.00 L611.49 1003.91 L611.86 1003.76 L612.22 1003.57 L612.56 1003.34 L612.87 1003.06 L613.15 1002.73 L613.40 1002.37 L613.60 1001.98 L613.76 1001.56 L613.87 1001.11 L613.92 1000.64 L613.91 1000.17 L613.85 999.69 L613.73 999.21 L613.55 998.75 L613.31 998.30 L613.01 997.88 L612.66 997.50 L612.26 997.15 L611.81 996.85 L611.33 996.60 L610.81 996.40 L610.26 996.27 L609.70 996.21 L609.12 996.21 L608.54 996.29 L607.97 996.43 L607.41 996.65 L606.87 996.93 L606.36 997.28 L605.90 997.70 L605.48 998.17 L605.11 998.70 L604.81 999.27 L604.58 999.89 L604.42 1000.53 L604.34 1001.20 L604.33 1001.88 L604.41 1002.56 L604.58 1003.24 L604.82 1003.89 L605.15 1004.53 L605.55 1005.12 L606.02 1005.67 L606.57 1006.16 L607.17 1006.59 L607.83 1006.95 L608.54 1007.23 L609.28 1007.43 L610.05 1007.53 L610.83 1007.55 L611.61 1007.47 L612.39 1007.29 L613.15 1007.03 L613.88 1006.67 L614.57 1006.22 L615.20 1005.68 L615.77 1005.07 L616.27 1004.39 L616.69 1003.65 L617.03 1002.86 L617.26 1002.02 L617.40 1001.15 L617.43 1000.27 L617.36 999.38 L617.18 998.50 L616.89 997.64 L616.50 996.81 L616.01 996.03 L615.43 995.30 L614.75 994.65 L614.00 994.07" fill="none" stroke="#a8a8a8" stroke-width="1.5"/>
<g fill="none" stroke="#b4b4b4" stroke-width="1.4"><circle cx="209" cy="1027.5" r="6.8"/><path d="M206 1018 L212 1018 M209 1018 L209 1020.7 M202.5 1020.5 L204 1022"/></g>
<path d="M608.04 1025.08 L607.94 1025.31 L607.87 1025.56 L607.82 1025.82 L607.81 1026.09 L607.84 1026.37 L607.90 1026.66 L607.99 1026.94 L608.13 1027.21 L608.30 1027.47 L608.51 1027.71 L608.75 1027.93 L609.02 1028.12 L609.33 1028.29 L609.65 1028.41 L610.00 1028.50 L610.36 1028.55 L610.74 1028.55 L611.12 1028.50 L611.49 1028.41 L611.86 1028.26 L612.22 1028.07 L612.56 1027.84 L612.87 1027.56 L613.15 1027.23 L613.40 1026.87 L613.60 1026.48 L613.76 1026.06 L613.87 1025.61 L613.92 1025.14 L613.91 1024.67 L613.85 1024.19 L613.73 1023.71 L613.55 1023.25 L613.31 1022.80 L613.01 1022.38 L612.66 1022.00 L612.26 1021.65 L611.81 1021.35 L611.33 1021.10 L610.81 1020.90 L610.26 1020.77 L609.70 1020.71 L609.12 1020.71 L608.54 1020.79 L607.97 1020.93 L607.41 1021.15 L606.87 1021.43 L606.36 1021.78 L605.90 1022.20 L605.48 1022.67 L605.11 1023.20 L604.81 1023.77 L604.58 1024.39 L604.42 1025.03 L604.34 1025.70 L604.33 1026.38 L604.41 1027.06 L604.58 1027.74 L604.82 1028.39 L605.15 1029.03 L605.55 1029.62 L606.02 1030.17 L606.57 1030.66 L607.17 1031.09 L607.83 1031.45 L608.54 1031.73 L609.28 1031.93 L610.05 1032.03 L610.83 1032.05 L611.61 1031.97 L612.39 1031.79 L613.15 1031.53 L613.88 1031.17 L614.57 1030.72 L615.20 1030.18 L615.77 1029.57 L616.27 1028.89 L616.69 1028.15 L617.03 1027.36 L617.26 1026.52 L617.40 1025.65 L617.43 1024.77 L617.36 1023.88 L617.18 1023.00 L616.89 1022.14 L616.50 1021.31 L616.01 1020.53 L615.43 1019.80 L614.75 1019.15 L614.00 1018.57" fill="none" stroke="#a8a8a8" stroke-width="1.5"/>
<!-- pane divider -->
<rect x="766" y="807" width="2" height="394" fill="#1a1a1a"/>
<!-- right pane -->
<rect x="766" y="796" width="1206" height="15" rx="4" fill="#141414"/>
<rect x="777" y="797.5" width="1185" height="11.5" fill="#6a6a6a"/>
<path d="M777 797.5 L774 797.5 A 6 5.75 0 0 0 774 809 L777 809 Z" fill="#3a8ee6"/>
<rect x="768" y="797.5" width="9" height="11.5" rx="5" fill="#3a8ee6"/>
<rect x="773" y="797.5" width="4" height="11.5" fill="#3a8ee6"/>
<rect x="777.5" y="798" width="1.3" height="11" fill="#c8c8c8"/>
<rect x="1962" y="797.5" width="10" height="11.5" rx="5" fill="#3a8ee6"/>
<rect x="1962" y="797.5" width="4" height="11.5" fill="#3a8ee6"/>
<rect x="768" y="838" width="1204" height="2" fill="#141414"/>
<rect x="768" y="861" width="1204" height="1.5" fill="#111"/>
<rect x="777" y="840" width="1185" height="21" fill="#636363"/>
<rect x="769" y="840" width="8.5" height="21" rx="4.5" fill="#3a8ee6"/>
<rect x="773" y="840" width="4.5" height="21" fill="#3a8ee6"/>
<rect x="1962" y="840" width="9" height="21" rx="4.5" fill="#3a8ee6"/>
<rect x="1962" y="840" width="4.5" height="21" fill="#3a8ee6"/>
<rect x="778" y="862.5" width="1184" height="4.5" fill="#10bf22"/>
<rect x="768" y="862.5" width="10" height="5" fill="#282828"/>
<rect x="768" y="867.5" width="10.5" height="23.5" fill="#4a4a4a"/>
<rect x="1962" y="867.5" width="10" height="23.5" fill="#474747"/>
<defs><linearGradient id="lb" x1="0" y1="0" x2="0" y2="1"><stop offset="0" stop-color="#c8dcd8"/><stop offset="0.12" stop-color="#a9c9c4"/><stop offset="1" stop-color="#8fb3ad"/></linearGradient></defs>
<rect x="778.5" y="867.5" width="1183.5" height="23.5" fill="url(#lb)"/>
<defs><filter id="nz" x="0" y="0" width="100%" height="100%"><feTurbulence type="fractalNoise" baseFrequency="0.9" numOctaves="2" seed="3"/><feColorMatrix values="0 0 0 0 0.35  0 0 0 0 0.45  0 0 0 0 0.43  0 0 0 0.55 0"/><feComposite in2="SourceGraphic" operator="in"/></filter></defs>
<rect x="778.5" y="869" width="1183.5" height="22" fill="#000" filter="url(#nz)" opacity="0.45"/>
<path d="M778.5 867.5 L787 867.5 Q 780 868 778.5 876 Z" fill="#111"/>
<path d="M1962 867.5 L1953.5 867.5 Q 1960.5 868 1962 876 Z" fill="#111"/>
<rect x="778.5" y="891" width="1183.5" height="309.5" fill="#333333"/>
<rect x="1962" y="891" width="10" height="309.5" fill="#2a2a2a"/>
<rect x="1972" y="868" width="24" height="333" fill="#232323"/>
<rect x="768" y="890.5" width="1204" height="1.2" fill="#222"/>
<rect x="768" y="915.5" width="1204" height="1.2" fill="#222"/>
<rect x="768" y="940.0" width="1204" height="1.2" fill="#222"/>
<rect x="768" y="964.5" width="1204" height="1.2" fill="#222"/>
<rect x="768" y="989.0" width="1204" height="1.2" fill="#222"/>
<rect x="768" y="1013.5" width="1204" height="1.2" fill="#222"/>
<rect x="768" y="1038.0" width="1204" height="1.2" fill="#222"/>
<rect x="768" y="1061.5" width="1204" height="1.2" fill="#222"/>
<rect x="855.0" y="831" width="1.2" height="7" fill="#8e8e8e"/>
<rect x="932.1" y="831" width="1.2" height="7" fill="#8e8e8e"/>
<rect x="1009.1" y="831" width="1.2" height="7" fill="#8e8e8e"/>
<rect x="1086.1" y="831" width="1.2" height="7" fill="#8e8e8e"/>
<rect x="1163.2" y="831" width="1.2" height="7" fill="#8e8e8e"/>
<rect x="1240.2" y="831" width="1.2" height="7" fill="#8e8e8e"/>
<rect x="1317.2" y="831" width="1.2" height="7" fill="#8e8e8e"/>
<rect x="1394.2" y="831" width="1.2" height="7" fill="#8e8e8e"/>
<rect x="1471.3" y="831" width="1.2" height="7" fill="#8e8e8e"/>
<rect x="1548.3" y="831" width="1.2" height="7" fill="#8e8e8e"/>
<rect x="1625.3" y="831" width="1.2" height="7" fill="#8e8e8e"/>
<rect x="1702.4" y="831" width="1.2" height="7" fill="#8e8e8e"/>
<rect x="1779.4" y="831" width="1.2" height="7" fill="#8e8e8e"/>
<rect x="1856.4" y="831" width="1.2" height="7" fill="#8e8e8e"/>
<rect x="1933.5" y="831" width="1.2" height="7" fill="#8e8e8e"/>
<path d="M1977 842 L1993.5 842 L1993.5 856 L1985.2 862.5 L1977 856 Z" fill="#a8a8a8"/>
<g fill="none" stroke="#a8a8a8" stroke-width="1.3"><path d="M1983 883 L1974 883 L1983 873"/><circle cx="1982" cy="886" r="3.5"/></g>
<rect x="1985" y="875" width="8.5" height="8" fill="#a8a8a8"/>
<!-- bottom bar -->
<rect x="3" y="1200.5" width="919" height="1.5" fill="#111"/>
<rect x="3" y="1201" width="1970" height="24.5" fill="#222"/><rect x="1973" y="1201" width="23" height="24.5" fill="#282828"/>
<rect x="9.5" y="1203" width="23.5" height="22" fill="#1c1c1c"/>
<g fill="#282828" stroke="#2f8ee6" stroke-width="1.4"><rect x="13.5" y="1206" width="9" height="9"/><rect x="16.5" y="1209.5" width="9" height="9"/><rect x="20" y="1213" width="9" height="9"/></g>
<rect x="23" y="1216" width="3" height="3" fill="#2f8ee6"/>
<g fill="none" stroke="#b4b4b4" stroke-width="1.4"><circle cx="45.5" cy="1211" r="5"/><rect x="47.5" y="1213" width="8.5" height="8.5"/></g>
<path d="M47.5 1213 L50 1213 A5 5 0 0 1 47.5 1215.7 Z" fill="#b4b4b4"/>
<g fill="none" stroke="#b4b4b4" stroke-width="1.5"><path d="M71 1205.5 Q68.5 1205.5 68.5 1208 L68.5 1211 L66.5 1213 L68.5 1215 L68.5 1218 Q68.5 1220.5 71 1220.5"/><path d="M80 1205.5 Q82.5 1205.5 82.5 1208 L82.5 1211 L84.5 1213 L82.5 1215 L82.5 1218 Q82.5 1220.5 80 1220.5"/></g>
<rect x="74.2" y="1205" width="2.6" height="16" fill="#555"/>
<g fill="#b4b4b4"><circle cx="101" cy="1213" r="5.5"/><rect x="93" y="1218" width="17" height="2"/><path d="M104 1218 L108 1212 L109 1213 L106 1218 Z"/><circle cx="108.5" cy="1209" r="1.3"/><circle cx="111.5" cy="1210" r="1.3"/></g>
<rect x="383" y="1203.5" width="191" height="20.5" rx="2" fill="#1e1e1e" stroke="#2e2e2e"/>
<path d="M775 1215.5 L781 1209.5 L784 1212 L785.5 1211 L789 1215.5 Z" fill="#b4b4b4"/>
<rect x="819" y="1213.3" width="55" height="1.6" fill="#3c3c3c"/>
<circle cx="811.7" cy="1215.5" r="5.5" fill="#222" stroke="#a8a8a8" stroke-width="2.2"/>
<path d="M891 1216.5 L899 1208.5 L902 1211 L905 1208 L915 1216.5 Z" fill="#b4b4b4"/>
<path d="M893 1216.5 L899.5 1210.5" stroke="#222" stroke-width="1"/>
</svg>
<div class="t" style="left:70.00px;top:761.11px;font-size:17.0px;color:#c4c4c4;transform:scaleX(0.7393)">1</div>
<div class="t" style="left:20.00px;top:796.52px;font-size:21.0px;color:#3a9be8;transform:scaleX(1.0221);font-weight:bold">0;00;00;00</div>
<div class="t" style="left:17.00px;top:820.23px;font-size:14.5px;color:#2a7bc2;transform:scaleX(0.9853)">00000 (29.97 fps)</div>
<div class="t" style="left:153.00px;top:849.50px;font-size:13.0px;color:#a0a0a0;transform:scaleX(0.9676)">#</div>
<div class="t" style="left:200.00px;top:848.20px;font-size:14.3px;color:#a8a8a8;transform:scaleX(0.9037)">Source Name</div>
<div class="t" style="left:584.00px;top:848.40px;font-size:14.3px;color:#a8a8a8;transform:scaleX(0.9319)">Parent &amp; Link</div>
<div class="t" style="left:154.00px;top:872.53px;font-size:16.5px;color:#c8c8c8;transform:scaleX(0.9796)">1</div>
<div class="t" style="left:225.00px;top:871.53px;font-size:16.5px;color:#d4d4d4;transform:scaleX(0.9769)">1.mp4</div>
<div class="t" style="left:619.00px;top:871.90px;font-size:16.3px;color:#d0d0d0;transform:scaleX(0.9502)">None</div>
<div class="t" style="left:155.00px;top:898.10px;font-size:16.3px;color:#b4b4b4;transform:scaleX(0.9352)">Masks</div>
<div class="t" style="left:203.00px;top:922.01px;font-size:17.0px;color:#b4b4b4;transform:scaleX(0.8760)">Mask 1</div>
<div class="t" style="left:397.00px;top:919.11px;font-size:17.0px;color:#a8a8a8;transform:scaleX(0.8727)">Add</div>
<div class="t" style="left:506.00px;top:920.53px;font-size:16.5px;color:#a8a8a8;transform:scaleX(0.9895)">Inverted</div>
<div class="t" style="left:227.30px;top:946.31px;font-size:17.0px;color:#b4b4b4;transform:scaleX(0.8803)">Mask Path</div>
<div class="t" style="left:227.30px;top:970.61px;font-size:17.0px;color:#b4b4b4;transform:scaleX(0.9300)">Mask Feather</div>
<div class="t" style="left:412.00px;top:969.11px;font-size:17.0px;color:#3a9be8;transform:scaleX(0.8846)">0,0,0,0</div>
<div class="t" style="left:463.00px;top:969.11px;font-size:17.0px;color:#b4b4b4;transform:scaleX(0.9202)">pixels</div>
<div class="t" style="left:227.30px;top:995.11px;font-size:17.0px;color:#b4b4b4;transform:scaleX(0.9098)">Mask Opacity</div>
<div class="t" style="left:388.00px;top:993.11px;font-size:17.0px;color:#3a9be8;transform:scaleX(0.8811)">100</div>
<div class="t" style="left:415.00px;top:993.11px;font-size:17.0px;color:#b4b4b4;transform:scaleX(0.8595)">%</div>
<div class="t" style="left:227.30px;top:1020.01px;font-size:17.0px;color:#b4b4b4;transform:scaleX(0.9035)">Mask Expansion</div>
<div class="t" style="left:388.00px;top:1017.71px;font-size:17.0px;color:#3a9be8;transform:scaleX(0.8460)">0,0</div>
<div class="t" style="left:413.00px;top:1017.71px;font-size:17.0px;color:#b4b4b4;transform:scaleX(0.9202)">pixels</div>
<div class="t" style="left:155.30px;top:1044.01px;font-size:17.0px;color:#b4b4b4;transform:scaleX(0.9072)">Transform</div>
<div class="t" style="left:386.00px;top:1042.11px;font-size:17.0px;color:#3a9be8;transform:scaleX(0.8779)">Reset</div>
<div class="a" style="left:302px;top:931px;width:140px;height:45.5px;background:#c6c6c8;border-radius:7px"></div>
<div class="a" style="left:308.5px;top:938.3px;width:126px;height:31.4px;background:#0c6fdb;border-radius:5px"></div>
<div class="t" style="left:322.00px;top:945.27px;font-size:20.0px;color:#ffffff;transform:scaleX(0.9551)">Track Mask</div>
<div class="t" style="left:844.50px;top:814.21px;font-size:15.7px;color:#a8a8a8;transform:scaleX(0.8697)">01s</div>
<div class="t" style="left:921.60px;top:814.21px;font-size:15.7px;color:#a8a8a8;transform:scaleX(0.8697)">02s</div>
<div class="t" style="left:998.60px;top:814.21px;font-size:15.7px;color:#a8a8a8;transform:scaleX(0.8697)">03s</div>
<div class="t" style="left:1075.60px;top:814.21px;font-size:15.7px;color:#a8a8a8;transform:scaleX(0.8697)">04s</div>
<div class="t" style="left:1152.70px;top:814.21px;font-size:15.7px;color:#a8a8a8;transform:scaleX(0.8697)">05s</div>
<div class="t" style="left:1229.70px;top:814.21px;font-size:15.7px;color:#a8a8a8;transform:scaleX(0.8697)">06s</div>
<div class="t" style="left:1306.70px;top:814.21px;font-size:15.7px;color:#a8a8a8;transform:scaleX(0.8697)">07s</div>
<div class="t" style="left:1383.70px;top:814.21px;font-size:15.7px;color:#a8a8a8;transform:scaleX(0.8697)">08s</div>
<div class="t" style="left:1460.80px;top:814.21px;font-size:15.7px;color:#a8a8a8;transform:scaleX(0.8697)">09s</div>
<div class="t" style="left:1537.80px;top:814.21px;font-size:15.7px;color:#a8a8a8;transform:scaleX(0.8697)">10s</div>
<div class="t" style="left:1614.80px;top:814.21px;font-size:15.7px;color:#a8a8a8;transform:scaleX(0.9113)">11s</div>
<div class="t" style="left:1691.90px;top:814.21px;font-size:15.7px;color:#a8a8a8;transform:scaleX(0.8697)">12s</div>
<div class="t" style="left:1768.90px;top:814.21px;font-size:15.7px;color:#a8a8a8;transform:scaleX(0.8697)">13s</div>
<div class="t" style="left:1845.90px;top:814.21px;font-size:15.7px;color:#a8a8a8;transform:scaleX(0.8697)">14s</div>
<div class="t" style="left:1923.00px;top:814.21px;font-size:15.7px;color:#a8a8a8;transform:scaleX(0.8697)">15s</div>
<div class="t" style="left:776.00px;top:814.21px;font-size:15.7px;color:#a8a8a8;transform:scaleX(0.8697)">00s</div>
<svg style="left:0;top:0" width="1999" height="1228" viewBox="0 0 1999 1228">
<rect x="773" y="896.0" width="11" height="2" fill="#c0c0c0"/><rect x="773" y="910.0" width="11" height="2" fill="#c0c0c0"/><rect x="776" y="897.0" width="5.5" height="14" fill="#b8b8b8"/><rect x="777.2" y="898.0" width="3" height="12" fill="#8a8a8a"/>
<rect x="773" y="921.0" width="11" height="2" fill="#c0c0c0"/><rect x="773" y="935.0" width="11" height="2" fill="#c0c0c0"/><rect x="776" y="922.0" width="5.5" height="14" fill="#b8b8b8"/><rect x="777.2" y="923.0" width="3" height="12" fill="#8a8a8a"/>
<rect x="773" y="945.0" width="11" height="2" fill="#c0c0c0"/><rect x="773" y="959.0" width="11" height="2" fill="#c0c0c0"/><rect x="776" y="946.0" width="5.5" height="14" fill="#b8b8b8"/><rect x="777.2" y="947.0" width="3" height="12" fill="#8a8a8a"/>
<rect x="773" y="970.0" width="11" height="2" fill="#c0c0c0"/><rect x="773" y="984.0" width="11" height="2" fill="#c0c0c0"/><rect x="776" y="971.0" width="5.5" height="14" fill="#b8b8b8"/><rect x="777.2" y="972.0" width="3" height="12" fill="#8a8a8a"/>
<rect x="773" y="994.5" width="11" height="2" fill="#c0c0c0"/><rect x="773" y="1008.5" width="11" height="2" fill="#c0c0c0"/><rect x="776" y="995.5" width="5.5" height="14" fill="#b8b8b8"/><rect x="777.2" y="996.5" width="3" height="12" fill="#8a8a8a"/>
<rect x="773" y="1019.0" width="11" height="2" fill="#c0c0c0"/><rect x="773" y="1033.0" width="11" height="2" fill="#c0c0c0"/><rect x="776" y="1020.0" width="5.5" height="14" fill="#b8b8b8"/><rect x="777.2" y="1021.0" width="3" height="12" fill="#8a8a8a"/>
<rect x="773" y="1043.5" width="11" height="2" fill="#c0c0c0"/><rect x="773" y="1057.5" width="11" height="2" fill="#c0c0c0"/><rect x="776" y="1044.5" width="5.5" height="14" fill="#b8b8b8"/><rect x="777.2" y="1045.5" width="3" height="12" fill="#8a8a8a"/>
<rect x="778" y="836" width="1.4" height="365" fill="#3d8ee8"/>
<path d="M771 818 L786.5 818 L786.5 827 L778.8 836.5 L771 827 Z" fill="#3d8ee8"/>
<rect x="776.5" y="826.5" width="5" height="1" fill="#bdbdbd"/>
<rect x="778.2" y="826.5" width="1" height="10" fill="#bdbdbd"/>
</svg>
<div class="t" style="left:152.00px;top:1205.91px;font-size:17.0px;color:#a8a8a8;transform:scaleX(0.9063)">Frame Render Time</div>
<div class="t" style="left:297.00px;top:1205.91px;font-size:17.0px;color:#5cd6a6;transform:scaleX(0.8815);font-weight:bold">9ms</div>
<div class="t" style="left:392.20px;top:1206.11px;font-size:17.0px;color:#b4b4b4;transform:scaleX(0.9205)">Toggle Switches / Modes</div>
</body></html>
